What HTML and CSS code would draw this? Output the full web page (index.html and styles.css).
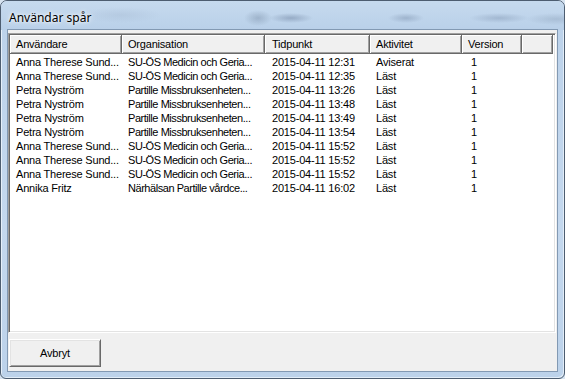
FILE: index.html
```html
<!DOCTYPE html>
<html lang="sv">
<head>
  <title>Användar spår</title>
  <meta charset="UTF-8" />
  <meta name="viewport" content="width=device-width" />
  <link rel="stylesheet" href="styles.css">
</head>
<body>
  <div class="window">
    <div class="titlebar">
      <span class="title">Användar spår</span>
    </div>
    <div class="client">
      <div class="listview">
        <div class="header">
          <div class="hcell">Användare</div>
          <div class="hcell">Organisation</div>
          <div class="hcell tid">Tidpunkt</div>
          <div class="hcell">Aktivitet</div>
          <div class="hcell">Version</div>
          <div class="hcell filler"></div>
        </div>
        <div class="rows">
          <div class="row"><span>Anna Therese Sund...</span><span class="org">SU-ÖS Medicin och Geria...</span><span class="tid">2015-04-11 12:31</span><span>Aviserat</span><span class="ver">1</span></div>
          <div class="row"><span>Anna Therese Sund...</span><span class="org">SU-ÖS Medicin och Geria...</span><span class="tid">2015-04-11 12:35</span><span>Läst</span><span class="ver">1</span></div>
          <div class="row"><span>Petra Nyström</span><span class="org">Partille Missbruksenheten...</span><span class="tid">2015-04-11 13:26</span><span>Läst</span><span class="ver">1</span></div>
          <div class="row"><span>Petra Nyström</span><span class="org">Partille Missbruksenheten...</span><span class="tid">2015-04-11 13:48</span><span>Läst</span><span class="ver">1</span></div>
          <div class="row"><span>Petra Nyström</span><span class="org">Partille Missbruksenheten...</span><span class="tid">2015-04-11 13:49</span><span>Läst</span><span class="ver">1</span></div>
          <div class="row"><span>Petra Nyström</span><span class="org">Partille Missbruksenheten...</span><span class="tid">2015-04-11 13:54</span><span>Läst</span><span class="ver">1</span></div>
          <div class="row"><span>Anna Therese Sund...</span><span class="org">SU-ÖS Medicin och Geria...</span><span class="tid">2015-04-11 15:52</span><span>Läst</span><span class="ver">1</span></div>
          <div class="row"><span>Anna Therese Sund...</span><span class="org">SU-ÖS Medicin och Geria...</span><span class="tid">2015-04-11 15:52</span><span>Läst</span><span class="ver">1</span></div>
          <div class="row"><span>Anna Therese Sund...</span><span class="org">SU-ÖS Medicin och Geria...</span><span class="tid">2015-04-11 15:52</span><span>Läst</span><span class="ver">1</span></div>
          <div class="row"><span>Annika Fritz</span><span class="org">Närhälsan Partille vårdce...</span><span class="tid">2015-04-11 16:02</span><span>Läst</span><span class="ver">1</span></div>
        </div>
      </div>
      <div class="footer">
        <button class="btn">Avbryt</button>
      </div>
    </div>
  </div>
</body>
</html>
```

FILE: styles.css
```css
html, body {
  margin: 0;
  padding: 0;
  background: #d6e3f0;
}

body {
  width: 565px;
  height: 379px;
  overflow: hidden;
  font-family: "Liberation Sans", Arial, sans-serif;
  font-size: 11px;
  letter-spacing: -0.2px;
  color: #000;
}

.window {
  box-sizing: border-box;
  width: 565px;
  height: 379px;
  border: 1px solid #4d5d70;
  border-radius: 7px 7px 6px 6px;
  padding: 0 7px 7px 7px;
  background: linear-gradient(to bottom, #bcd2ea 0%, #c4d8ee 60%, #bcd2ea 100%);
  box-shadow: inset 1px 1px 0 #e6f0fa, inset -1px -1px 0 #e2edf8;
  display: flex;
  flex-direction: column;
}

.titlebar {
  height: 29px;
  display: flex;
  align-items: center;
  margin: 0 -7px;
  padding: 0 8px;
  border-radius: 6px 6px 0 0;
  /* blurred desktop behind the glass */
  background:
    radial-gradient(ellipse 14px 8px at 257px 17px, rgba(120, 140, 165, 0.45), transparent),
    radial-gradient(ellipse 22px 5px at 290px 17px, rgba(110, 130, 160, 0.5), transparent),
    radial-gradient(ellipse 18px 5px at 405px 17px, rgba(110, 130, 160, 0.4), transparent),
    radial-gradient(ellipse 30px 5px at 498px 17px, rgba(110, 130, 160, 0.35), transparent),
    radial-gradient(ellipse 40px 8px at 120px 14px, rgba(150, 170, 195, 0.25), transparent),
    radial-gradient(ellipse 30px 6px at 555px 18px, rgba(130, 150, 175, 0.35), transparent),
    linear-gradient(to bottom, #c6daee 0%, #b9d0e9 100%);
}

.title {
  font-family: "Noto Sans", "Open Sans", sans-serif;
  font-size: 12px;
  letter-spacing: 0;
  color: #000;
  padding-top: 3px;
  text-shadow: 0 0 6px #fff, 0 0 3px #fff;
}

.client {
  flex: 1;
  background: #f0f0f0;
  box-shadow: 0 0 0 1px #8299b3;
  padding: 3px 1px 4px 0;
  display: flex;
  flex-direction: column;
}

.listview {
  height: 300px;
  box-sizing: border-box;
  background: #fff;
  border: 1px solid;
  border-color: #a0a0a0 #fff #fff #a0a0a0;
  box-shadow: inset 1px 1px 0 #696969, inset -1px -1px 0 #e3e3e3;
  padding: 1px;
  display: flex;
  flex-direction: column;
}

.header,
.row {
  display: grid;
  grid-template-columns: 112px 143px 105px 92px 60px 1fr;
}

.header {
  height: 19px;
}

.hcell {
  box-sizing: border-box;
  background: #f0f0f0;
  border-right: 1px solid #696969;
  border-bottom: 1px solid #696969;
  box-shadow: inset 1px 1px 0 #fff, inset -1px -1px 0 #a0a0a0;
  padding: 3px 0 0 6px;
  white-space: nowrap;
  overflow: hidden;
}

.hcell.tid,
.row .tid {
  padding-left: 7px;
}

.hcell.filler {
  margin-right: 1px;
}

.rows {
  padding-top: 1px;
}

.row {
  height: 14px;
  line-height: 14px;
}

.row span {
  padding-left: 6px;
  white-space: nowrap;
  overflow: hidden;
}

.row .org {
  letter-spacing: -0.45px;
}

.row .ver {
  padding-left: 9px;
}

.footer {
  padding: 6px 0 0 1px;
}

.btn {
  width: 92px;
  height: 28px;
  font-family: "Liberation Sans", Arial, sans-serif;
  font-size: 11px;
  letter-spacing: -0.2px;
  color: #000;
  background: #f0f0f0;
  border: 1px solid;
  border-color: #fff #696969 #696969 #fff;
  box-shadow: inset 1px 1px 0 #e3e3e3, inset -1px -1px 0 #a0a0a0;
  padding: 0;
  border-radius: 0;
}
```
